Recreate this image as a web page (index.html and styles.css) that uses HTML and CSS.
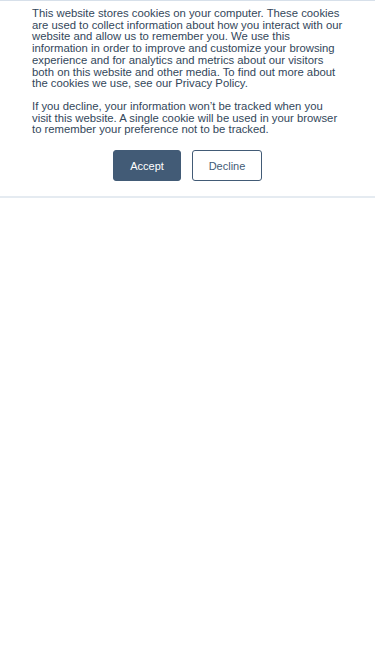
FILE: index.html
```html
<!DOCTYPE html>
<html lang="en">
  <head>
    <meta charset="UTF-8" />
    <title>Cookie banner</title>
    <meta name="viewport" content="width=device-width, initial-scale=1.0" />
    <link rel="stylesheet" href="styles.css">
  </head>
  <body>
    <div class="cookie-banner">
      <div class="cookie-text">
        <p>
          This website stores cookies on your computer. These cookies<br />
          are used to collect information about how you interact with our<br />
          website and allow us to remember you. We use this<br />
          information in order to improve and customize your browsing<br />
          experience and for analytics and metrics about our visitors<br />
          both on this website and other media. To find out more about<br />
          the cookies we use, see our Privacy Policy.
        </p>
        <p>
          If you decline, your information won’t be tracked when you<br />
          visit this website. A single cookie will be used in your browser<br />
          to remember your preference not to be tracked.
        </p>
      </div>
      <div class="cookie-actions">
        <button class="btn btn-accept">Accept</button>
        <button class="btn btn-decline">Decline</button>
      </div>
    </div>
  </body>
</html>
```

FILE: styles.css
```css
body {
  margin: 0;
  background: white;
  font-family: 'Liberation Sans', Arial, sans-serif;
}

.cookie-banner {
  background: white;
  border-top: 1px solid #d7e0ea;
  border-bottom: 2px solid #e5ebf1;
  padding: 7px 32px 15px 32px;
}

.cookie-text p {
  margin: 0 0 11px 0;
  font-size: 11.3px;
  line-height: 11.7px;
  color: #33475b;
  white-space: nowrap;
}

.cookie-text p:last-child {
  margin-bottom: 0;
}

.cookie-actions {
  display: flex;
  justify-content: center;
  gap: 11px;
  margin-top: 14px;
}

.btn {
  font-family: 'Liberation Sans', Arial, sans-serif;
  font-size: 11px;
  height: 31px;
  border-radius: 3px;
  cursor: pointer;
}

.btn-accept {
  width: 68px;
  background: #425b76;
  color: white;
  border: 1px solid #425b76;
}

.btn-decline {
  width: 70px;
  background: white;
  color: #425b76;
  border: 1px solid #425b76;
}
```
